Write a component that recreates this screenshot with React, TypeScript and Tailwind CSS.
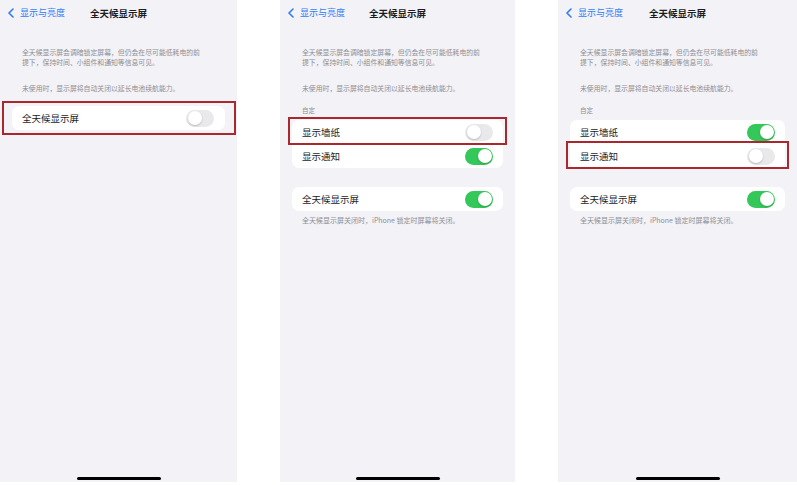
import type { ReactNode } from "react";

const font = { fontFamily: '"Noto Sans CJK SC", "Noto Sans", sans-serif' };

function Toggle({ on }: { on: boolean }) {
  return (
    <div
      className={`flex h-[17px] w-[28px] items-center rounded-full p-[1.5px] ${
        on ? "justify-end bg-[#34c759]" : "justify-start bg-[#e9e9eb]"
      }`}
    >
      <div className="h-[14px] w-[14px] rounded-full bg-white shadow-[0_1px_2px_rgba(0,0,0,0.2)]" />
    </div>
  );
}

function Row({ label, on, marked }: { label: string; on: boolean; marked?: boolean }) {
  return (
    <div className="relative flex h-[24px] items-center justify-between pl-[10px] pr-[10px]">
      <span className="text-[9.5px] text-[#1c1c1e]">{label}</span>
      <Toggle on={on} />
      {/* 红框标注 */}
      {marked && (
        <div className="pointer-events-none absolute -left-[4px] -right-[4px] -top-[3px] -bottom-[1px] border-2 border-[#a8282d]" />
      )}
    </div>
  );
}

function Phone({ width, children }: { width: string; children: ReactNode }) {
  return (
    <div className={`flex h-[482px] ${width} flex-col bg-[#f2f2f7]`}>
      {/* 导航栏 */}
      <div className="grid h-[26px] grid-cols-[1fr_auto_1fr] items-center px-[8px]">
        <div className="flex items-center gap-[6px] text-[9px] text-[#2f7cf6]">
          <svg width="6" height="10" viewBox="0 0 6 10" fill="none">
            <polyline points="5,1 1,5 5,9" stroke="#2f7cf6" strokeWidth="1.6" strokeLinecap="round" strokeLinejoin="round" />
          </svg>
          <span>显示与亮度</span>
        </div>
        <div className="text-[9.5px] font-semibold text-[#1c1c1e]">全天候显示屏</div>
        <div />
      </div>

      <div className="flex-1 px-[12px]">
        <p className="mt-[21px] whitespace-nowrap pl-[10px] text-[6.85px] leading-[10px] text-[#8e8e93]">
          全天候显示屏会调暗锁定屏幕，但仍会在尽可能低耗电的前
          <br />
          提下，保持时间、小组件和通知等信息可见。
        </p>
        <p className="mt-[16px] whitespace-nowrap pl-[10px] text-[6.85px] leading-[10px] text-[#8e8e93]">
          未使用时，显示屏将自动关闭以延长电池续航能力。
        </p>
        {children}
      </div>

      {/* Home 指示条 */}
      <div className="mb-[2px] flex justify-center">
        <div className="h-[3px] w-[84px] rounded-full bg-black" />
      </div>
    </div>
  );
}

function CustomSection({ wallpaper, notify }: { wallpaper: boolean; notify: boolean }) {
  return (
    <>
      <div className="mt-[12px] pl-[10px] text-[6.5px] leading-[10px] text-[#8e8e93]">自定</div>
      <div className="mt-[5px] rounded-[7px] bg-white">
        <Row label="显示墙纸" on={wallpaper} marked={!wallpaper} />
        <Row label="显示通知" on={notify} marked={!notify} />
      </div>
      <div className="mt-[19px] rounded-[7px] bg-white">
        <Row label="全天候显示屏" on />
      </div>
      <p className="mt-[4px] whitespace-nowrap pl-[10px] text-[7px] leading-[10px] text-[#8e8e93]">
        全天候显示屏关闭时，iPhone 锁定时屏幕将关闭。
      </p>
    </>
  );
}

export default function App() {
  return (
    <main className="flex h-[485px] w-[797px] bg-white" style={font}>
      <Phone width="w-[237px]">
        <div className="relative mt-[13px] rounded-[7px] bg-white">
          <div className="flex h-[24px] items-center justify-between pl-[10px] pr-[11px]">
            <span className="text-[9.5px] text-[#1c1c1e]">全天候显示屏</span>
            <Toggle on={false} />
          </div>
          <div className="pointer-events-none absolute -left-[10px] -right-[11px] -top-[5px] -bottom-[5px] border-2 border-[#a8282d]" />
        </div>
      </Phone>

      <div className="w-[43px]" />
      <Phone width="w-[235px]">
        <CustomSection wallpaper={false} notify />
      </Phone>

      <div className="w-[43px]" />
      <Phone width="w-[239px]">
        <CustomSection wallpaper notify={false} />
      </Phone>
    </main>
  );
}
